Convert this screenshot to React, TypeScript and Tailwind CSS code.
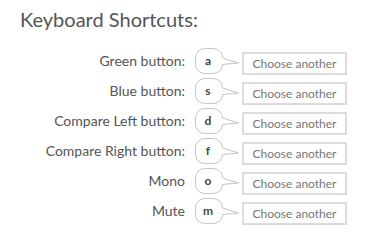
const shortcuts = [
  { label: 'Green button:', key: 'a' },
  { label: 'Blue button:', key: 's' },
  { label: 'Compare Left button:', key: 'd' },
  { label: 'Compare Right button:', key: 'f' },
  { label: 'Mono', key: 'o' },
  { label: 'Mute', key: 'm' },
]

function KeyBubble({ k }: { k: string }) {
  return (
    <div className="relative w-[45px] h-[26px]">
      <svg width="45" height="26" viewBox="0 0 45 26" className="absolute inset-0">
        <path
          d="M9.5,0.5 H18 A9.5,9.5 0 0 1 27.5,10 L43.5,15 L27.5,16.5 A9,9 0 0 1 18.5,25.5 H9.5 A9,9 0 0 1 0.5,16.5 V10 A9.5,9.5 0 0 1 9.5,0.5 Z"
          fill="#fff"
          stroke="#c4c4c4"
          strokeWidth="1"
        />
      </svg>
      <span className="absolute left-0 top-0 w-[26px] h-[26px] flex items-center justify-center text-[12px] font-bold text-[#444]">
        {k}
      </span>
    </div>
  )
}

export default function App() {
  return (
    <div className="w-[376px] h-[241px] bg-white pt-[6px] font-['Lato','Liberation_Sans',sans-serif]">
      <h2 className="pl-[20px] text-[20px] leading-[26px] text-[#555]">Keyboard Shortcuts:</h2>
      <div className="mt-[16px] flex flex-col gap-[4px]">
        {shortcuts.map((s) => (
          <div key={s.key} className="flex items-start h-[26px]">
            <span className="w-[185px] mt-[5px] text-right text-[14px] leading-[16px] text-[#555]">{s.label}</span>
            <div className="ml-[10px]">
              <KeyBubble k={s.key} />
            </div>
            <button className="ml-[2px] mt-[4px] w-[105px] h-[23px] border-2 border-[#dcdcdc] text-[12px] leading-[14px] text-[#777] bg-white">
              Choose another
            </button>
          </div>
        ))}
      </div>
    </div>
  )
}
